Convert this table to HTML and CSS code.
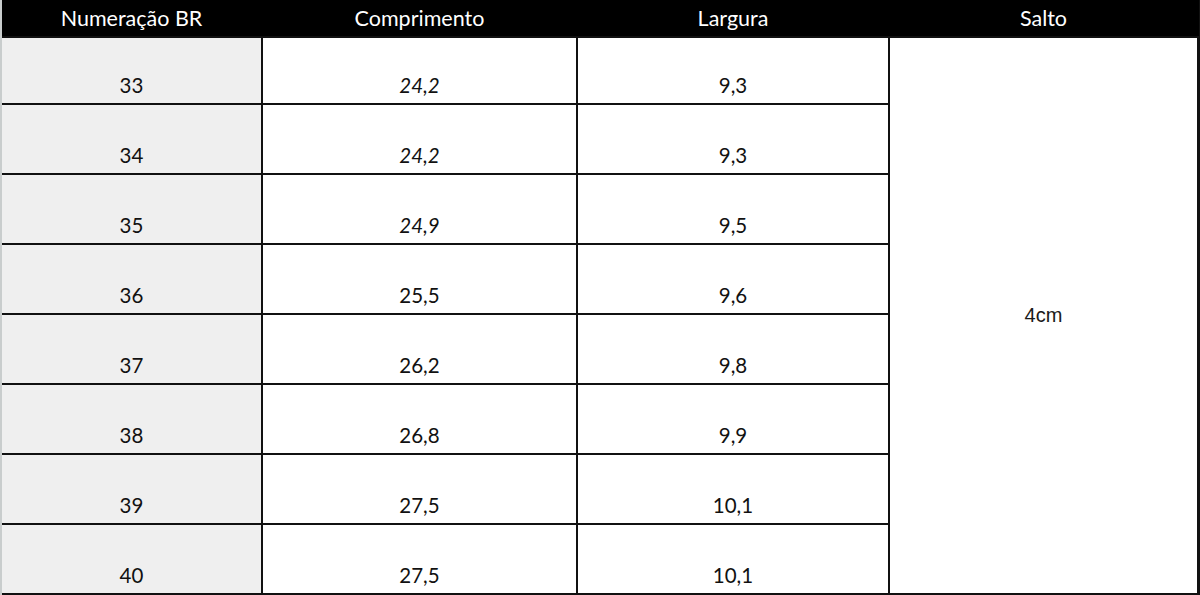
FILE: index.html
```html
<!DOCTYPE html>
<html lang="pt-BR">
<head>
<meta charset="utf-8">
<title>Tabela de medidas</title>
<link rel="stylesheet" href="styles.css">
</head>
<body>
<div class="sheet">
  <div class="hd">Numeração BR</div>
  <div class="hd">Comprimento</div>
  <div class="hd">Largura</div>
  <div class="hd">Salto</div>

  <div class="c size">33</div><div class="c it">24,2</div><div class="c">9,3</div>
  <div class="salto">4cm</div>
  <div class="c size">34</div><div class="c it">24,2</div><div class="c">9,3</div>
  <div class="c size">35</div><div class="c it">24,9</div><div class="c">9,5</div>
  <div class="c size">36</div><div class="c">25,5</div><div class="c">9,6</div>
  <div class="c size">37</div><div class="c">26,2</div><div class="c">9,8</div>
  <div class="c size">38</div><div class="c">26,8</div><div class="c">9,9</div>
  <div class="c size">39</div><div class="c">27,5</div><div class="c">10,1</div>
  <div class="c size">40</div><div class="c">27,5</div><div class="c">10,1</div>
</div>
</body>
</html>
```
FILE: styles.css
```css
html, body {
  margin: 0;
  padding: 0;
  background: #ffffff;
}

.sheet {
  width: 1197px;
  display: grid;
  grid-template-columns: 259px 313px 310px 307px;
  grid-template-rows: 36px 65px repeat(7, 68px);
  column-gap: 2px;
  row-gap: 2px;
  background: #111111;
  border-left: 2px solid #c9cdcd;
  padding: 0 2px 2px 0;
  font-family: "Lato", "Open Sans", sans-serif;
  font-size: 20.5px;
  color: #111111;
}

.hd {
  background: #000000;
  color: #ffffff;
  display: flex;
  align-items: center;
  justify-content: center;
  margin-right: -2px;
  padding-right: 2px;
  font-size: 21.5px;
}

.c {
  background: #ffffff;
  display: flex;
  align-items: flex-end;
  justify-content: center;
  padding-bottom: 6px;
  line-height: 24px;
}

.c.size {
  background: #efefef;
}

.c.it {
  font-style: italic;
}

.salto {
  grid-column: 4;
  grid-row: 2 / span 8;
  background: #ffffff;
  display: flex;
  align-items: center;
  justify-content: center;
  font-family: "Liberation Sans", Arial, sans-serif;
  font-size: 20px;
  color: #1a1a1a;
}
```
